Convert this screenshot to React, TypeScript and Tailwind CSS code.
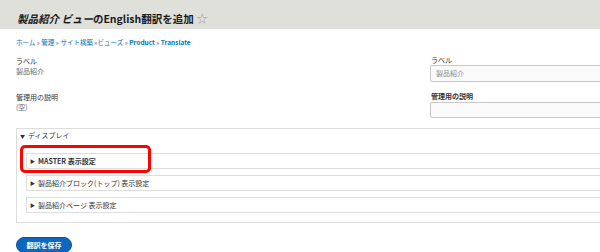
import React from "react";

const font = { fontFamily: '"Noto Sans CJK JP", "Noto Sans", sans-serif' };

function Box({ children, bold }: { children: React.ReactNode; bold?: boolean }) {
  return (
    <div className="h-[16px] border border-[#dedede] flex items-center pl-[3px] text-[7px] leading-[10px] text-[#333]">
      <span className="text-[5px] mr-[3px]">▶</span>
      <span className={bold ? "font-bold" : ""}>{children}</span>
    </div>
  );
}

export default function App() {
  return (
    <div className="w-[600px] h-[252px] overflow-hidden bg-white relative" style={font}>
      <div className="h-[29px] bg-[#e0e0da] flex items-center pl-[17px] pt-[8px]">
        <h1 className="text-[10.5px] leading-[14px] font-bold text-[#1a1a1a] whitespace-nowrap">
          <em className="italic">製品紹介 ビュー</em>のEnglish翻訳を追加
          <span className="ml-[3px] font-normal text-[#999] text-[11px]">☆</span>
        </h1>
      </div>
      <div className="w-[640px] pl-[16px]">
        <div className="mt-[8px] h-[10px] text-[6.5px] leading-[10px] text-[#0074bd] whitespace-nowrap">
          ホーム <span className="text-[#555]">»</span> 管理 <span className="text-[#555]">»</span> サイト構築 <span className="text-[#555]">»</span>ビューズ <span className="text-[#555]">»</span> <span className="font-bold">Product</span> <span className="text-[#555]">»</span> <span className="font-bold">Translate</span>
        </div>
        <div className="flex mt-[9px]">
          <div className="w-[414px] text-[7px] text-[#333]">
            <div className="leading-[10px]">ラベル</div>
            <div className="leading-[10px] text-[#666]">製品紹介</div>
            <div className="leading-[10px] mt-[16px]">管理用の説明</div>
            <div className="leading-[10px] text-[#666]">(空)</div>
          </div>
          <div className="flex-1 text-[7px] text-[#333]">
            <div className="leading-[9px] pl-[1px]">ラベル</div>
            <div className="h-[17px] border border-[#c8c8c8] rounded-[2px] bg-[#fafafa] flex items-center pl-[5px] text-[#888]">製品紹介</div>
            <div className="leading-[9px] mt-[10px] pl-[1px] font-bold">管理用の説明</div>
            <div className="h-[16px] mt-[1px] border border-[#c8c8c8] rounded-[2px] bg-[#fafafa]"></div>
          </div>
        </div>
        <div className="mt-[10px] h-[95px] border border-[#dcdcdc] pl-[3px] pt-[1px]">
          <div className="text-[7px] leading-[10px] text-[#333]">
            <span className="text-[5px] mr-[3px]">▼</span>ディスプレイ
          </div>
          <div className="ml-[6px] mt-[12px] flex flex-col gap-[6px]">
            <Box bold>MASTER 表示設定</Box>
            <Box>製品紹介ブロック(トップ) 表示設定</Box>
            <Box>製品紹介ページ 表示設定</Box>
          </div>
        </div>
        <div className="mt-[6px]">
          <button className="w-[56px] h-[16px] rounded-full bg-[#0d68bd] border border-[#0a55a0] text-white text-[7px] font-bold leading-[14px]">
            翻訳を保存
          </button>
        </div>
      </div>
      <div className="absolute left-[20px] top-[145px] w-[131px] h-[28px] border-[3px] border-[#ff0000] rounded-[5px]"></div>
    </div>
  );
}
